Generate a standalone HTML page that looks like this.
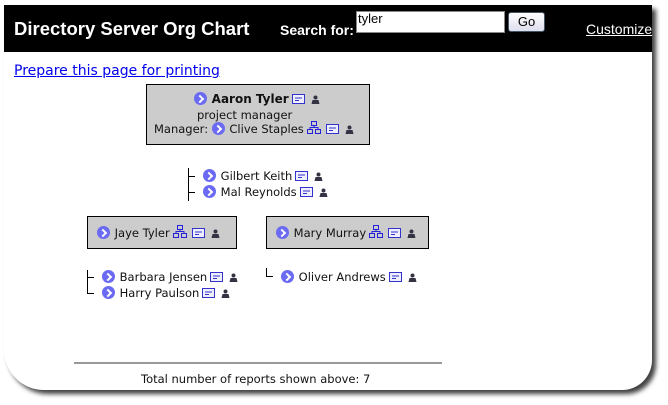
<!DOCTYPE html>
<html><head><style>
*{margin:0;padding:0;box-sizing:border-box}
body{width:668px;height:405px;background:#fff;position:relative;overflow:hidden;font-family:"DejaVu Sans",sans-serif;font-size:11.5px;color:#111}
.win{position:absolute;left:4px;top:5px;width:648px;height:385px;background:#fff;border-bottom-left-radius:40px;border-bottom-right-radius:30px;box-shadow:4px 4px 5px rgba(0,0,0,.75)}
.hdr{position:absolute;left:4px;top:5px;width:648px;height:47px;background:#000;color:#fff;font-family:"Liberation Sans",sans-serif}
.abs{position:absolute;white-space:nowrap}
.box{position:absolute;background:#ccc;border:1px solid #000}
.ci{display:inline-block;width:13px;height:13px;border-radius:50%;background:#6a6af2;vertical-align:-2px;position:relative;margin-right:1px}
.ci:after{content:"";position:absolute;left:3px;top:4px;width:4px;height:4px;border-top:2px solid #fff;border-right:2px solid #fff;transform:rotate(45deg)}
svg{vertical-align:-1px;margin-left:3px}
.ln{position:absolute;background:#000}
</style></head><body>
<div class="win"></div>
<div class="hdr">
<div class="abs" style="left:10px;top:13px;font-size:18.5px;font-weight:bold">Directory Server Org Chart</div>
<div class="abs" style="left:276px;top:17px;font-size:14px;font-weight:bold">Search for:</div>
<div class="abs" style="left:352px;top:6px;width:149px;height:22px;background:#fff;border:1px solid #888;color:#000;font-size:13px;padding-left:1px;line-height:14px">tyler</div>
<div class="abs" style="left:504px;top:7px;width:37px;height:20px;background:linear-gradient(#fff,#dde);border:1px solid #456;border-radius:3px;color:#000;font-size:13px;text-align:center;line-height:18px">Go</div>
<div class="abs" style="left:582px;top:16px;font-size:14px;text-decoration:underline">Customize</div>
</div>
<div class="abs" style="left:14px;top:63px;font-size:14px;color:#00e;text-decoration:underline">Prepare this page for printing</div>

<svg width="0" height="0" style="position:absolute"><defs>
<g id="card"><rect x="0.5" y="0.5" width="12" height="9" fill="#eef" stroke="#33c"/><line x1="3" y1="4" x2="10" y2="4" stroke="#33c"/><line x1="3" y1="6.5" x2="7" y2="6.5" stroke="#33c"/></g>
<g id="per"><circle cx="4.5" cy="2.5" r="2" fill="#334"/><path d="M0.5 9 L1.5 5 H7.5 L8.5 9Z" fill="#334"/></g>
<g id="org"><rect x="4.5" y="0.5" width="5" height="4" fill="none" stroke="#22d"/><rect x="0.5" y="8.5" width="5" height="4" fill="none" stroke="#22d"/><rect x="8.5" y="8.5" width="5" height="4" fill="none" stroke="#22d"/><path d="M7 4.5V6.5H3V8.5M7 6.5H11V8.5" fill="none" stroke="#22d"/></g>
</defs></svg>

<div class="box" style="left:146px;top:84px;width:224px;height:61px"></div>
<div class="abs" style="left:194px;top:92px"><span class="ci"></span> <b style="font-size:12px">Aaron Tyler</b><svg width="13" height="10"><use href="#card"/></svg><svg width="9" height="9" style="margin-left:6px"><use href="#per"/></svg></div>
<div class="abs" style="left:197px;top:108px">project manager</div>
<div class="abs" style="left:154px;top:121px">Manager: <span class="ci"></span> Clive Staples<svg width="14" height="13"><use href="#org"/></svg><svg width="13" height="10" style="margin-left:5px"><use href="#card"/></svg><svg width="9" height="9" style="margin-left:6px"><use href="#per"/></svg></div>

<div class="ln" style="left:188px;top:168px;width:1px;height:33px"></div>
<div class="ln" style="left:188px;top:176px;width:7px;height:1px"></div>
<div class="ln" style="left:188px;top:192px;width:7px;height:1px"></div>
<div class="abs" style="left:203px;top:169px"><span class="ci"></span> Gilbert Keith<svg width="13" height="10"><use href="#card"/></svg><svg width="9" height="9" style="margin-left:6px"><use href="#per"/></svg></div>
<div class="abs" style="left:203px;top:185px"><span class="ci"></span> Mal Reynolds<svg width="13" height="10"><use href="#card"/></svg><svg width="9" height="9" style="margin-left:6px"><use href="#per"/></svg></div>

<div class="box" style="left:87px;top:216px;width:150px;height:33px"></div>
<div class="abs" style="left:97px;top:225px"><span class="ci"></span> Jaye Tyler<svg width="14" height="13"><use href="#org"/></svg><svg width="13" height="10" style="margin-left:5px"><use href="#card"/></svg><svg width="9" height="9" style="margin-left:6px"><use href="#per"/></svg></div>
<div class="box" style="left:266px;top:216px;width:163px;height:33px"></div>
<div class="abs" style="left:276px;top:225px"><span class="ci"></span> Mary Murray<svg width="14" height="13"><use href="#org"/></svg><svg width="13" height="10" style="margin-left:5px"><use href="#card"/></svg><svg width="9" height="9" style="margin-left:6px"><use href="#per"/></svg></div>

<div class="ln" style="left:87px;top:270px;width:1px;height:24px"></div>
<div class="ln" style="left:87px;top:277px;width:7px;height:1px"></div>
<div class="ln" style="left:87px;top:293px;width:7px;height:1px"></div>
<div class="abs" style="left:102px;top:270px"><span class="ci"></span> Barbara Jensen<svg width="13" height="10"><use href="#card"/></svg><svg width="9" height="9" style="margin-left:6px"><use href="#per"/></svg></div>
<div class="abs" style="left:102px;top:286px"><span class="ci"></span> Harry Paulson<svg width="13" height="10"><use href="#card"/></svg><svg width="9" height="9" style="margin-left:6px"><use href="#per"/></svg></div>
<div class="ln" style="left:266px;top:268px;width:1px;height:9px"></div>
<div class="ln" style="left:266px;top:276px;width:7px;height:1px"></div>
<div class="abs" style="left:281px;top:270px"><span class="ci"></span> Oliver Andrews<svg width="13" height="10"><use href="#card"/></svg><svg width="9" height="9" style="margin-left:6px"><use href="#per"/></svg></div>

<div class="abs" style="left:74px;top:362px;width:368px;height:2px;background:#999"></div>
<div class="abs" style="left:141px;top:372px">Total number of reports shown above: 7</div>
</body></html>
